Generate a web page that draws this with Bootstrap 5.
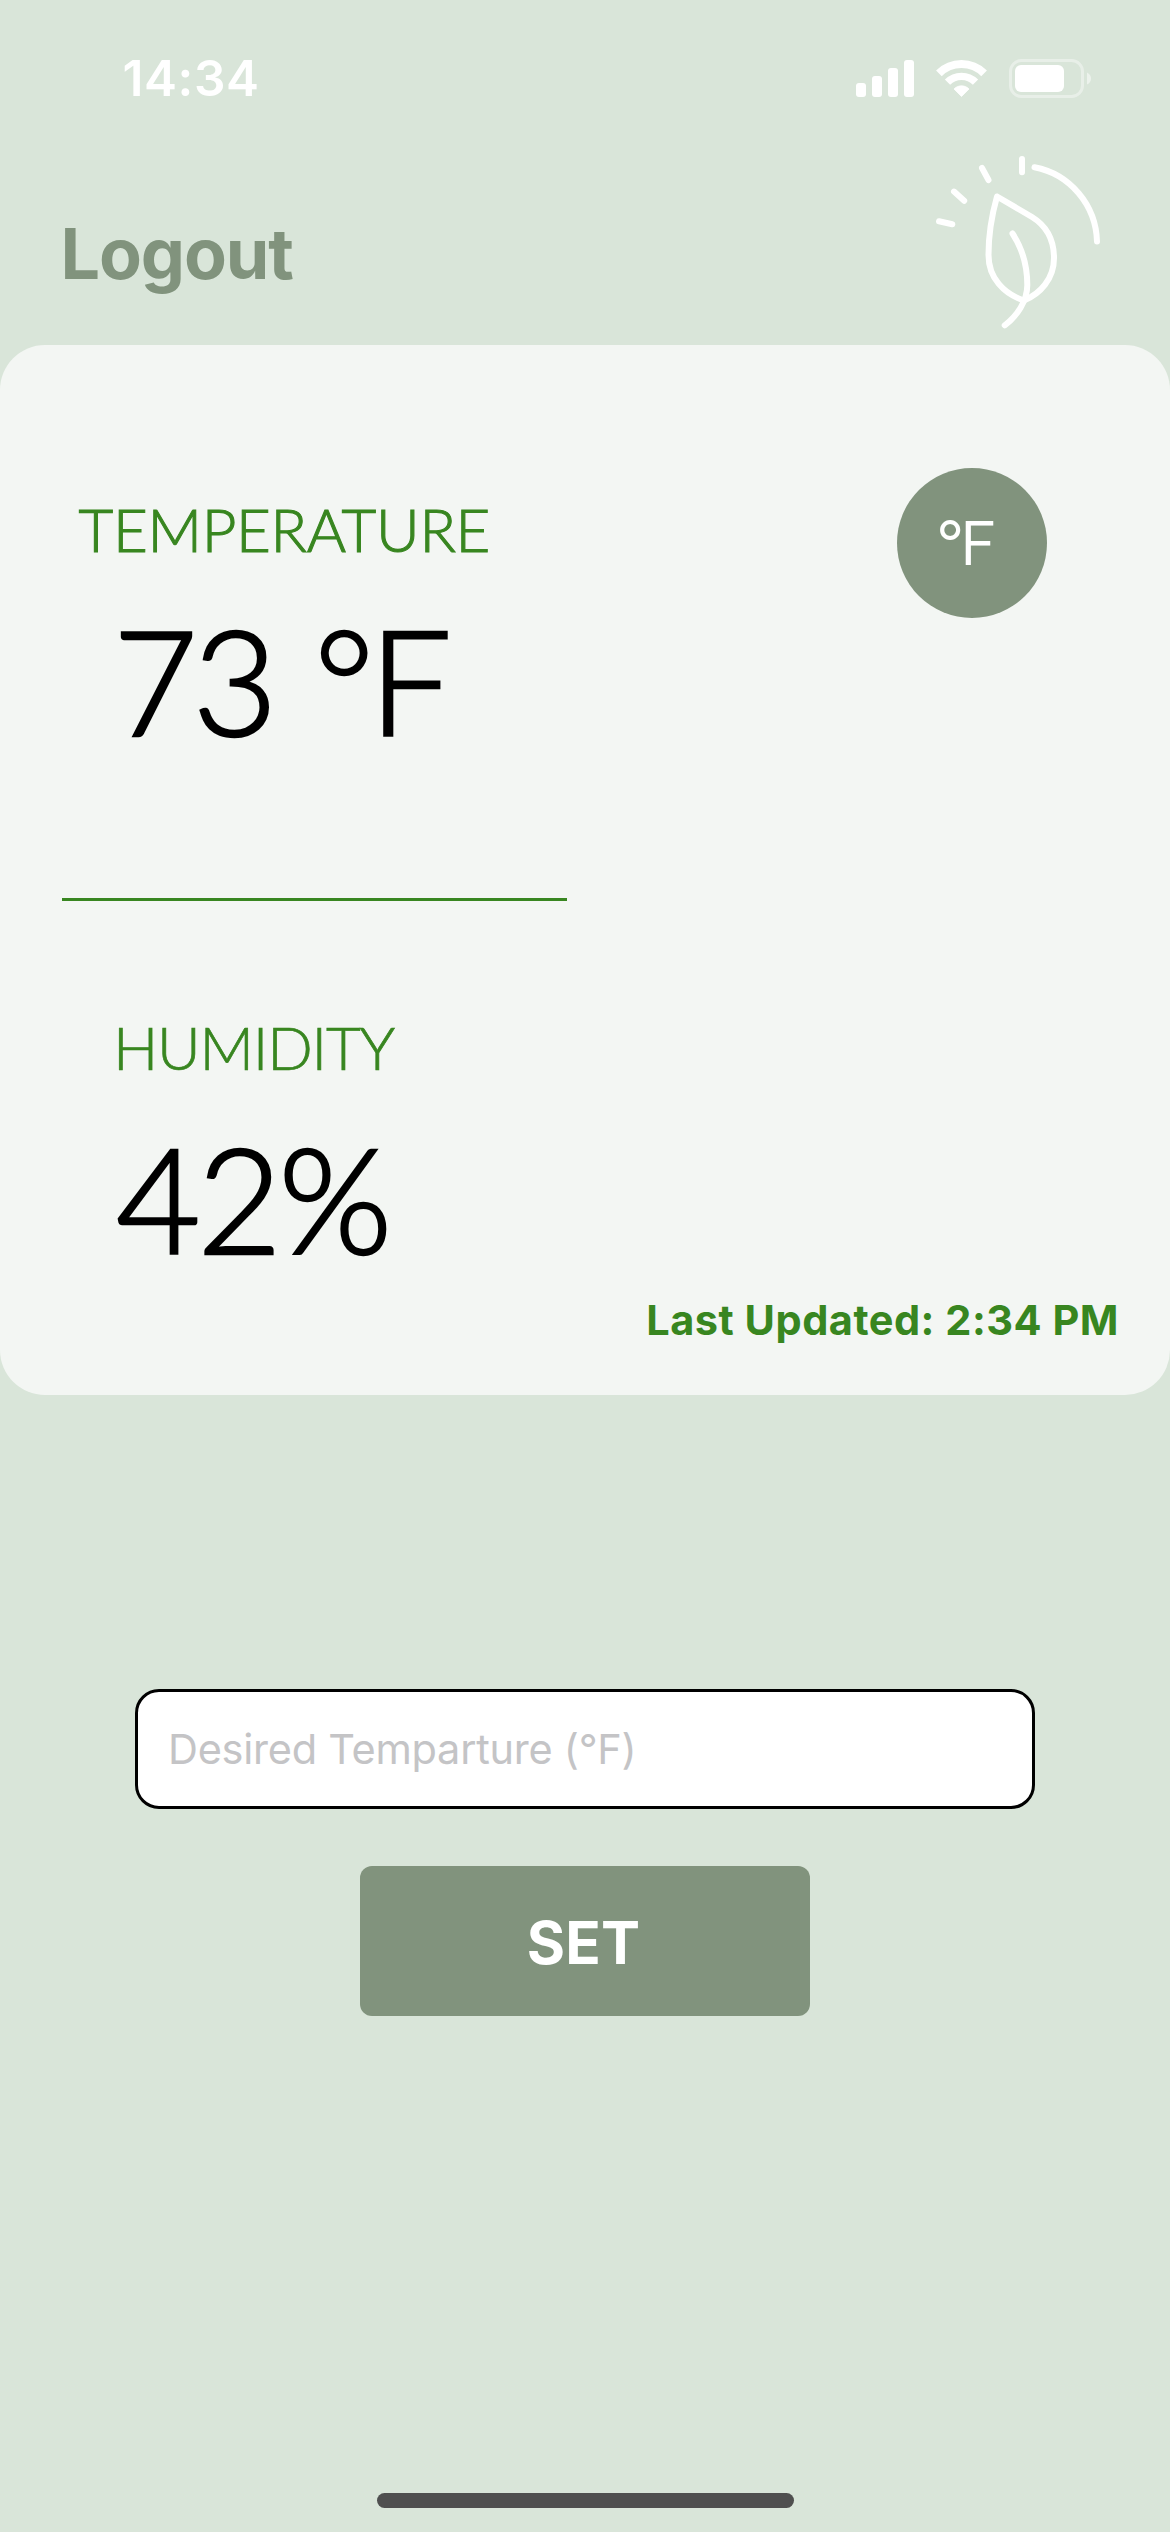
<!DOCTYPE html>
<html lang="en">
<head>
<meta charset="utf-8">
<meta name="viewport" content="width=device-width, initial-scale=1">
<title>Greenhouse</title>
<link href="https://cdn.jsdelivr.net/npm/bootstrap@5.3.0/dist/css/bootstrap.min.css" rel="stylesheet">
<style>
  body { background: #d9e5d9; font-family: Inter, "Liberation Sans", sans-serif; color: #000; }
  .screen { height: 2532px; overflow: hidden; }
  .status-row { height: 156px; padding: 0 79px 0 122.5px; }
  .clock { font-size: 49.5px; font-weight: 600; line-height: 60px; letter-spacing: .58px; }
  .status-icons { gap: 22px; }
  .top-row { height: 189px; padding: 0 50px 0 60.5px; }
  .logout { font-size: 70px; font-weight: 700; line-height: 84px; letter-spacing: -1.1px; color: #81937d; padding-top: 6px; }
  .readings { height: 1050px; border-radius: 45px; background: #f3f6f3; }
  .readings-left { width: 600px; padding-top: 148px; }
  .readings-right { padding: 123px 51px 50px 0; }
  .avenir { font-family: Lato, "Liberation Sans", sans-serif; font-weight: 300; white-space: nowrap; }
  .reading-title { font-size: 60px; line-height: 72px; color: #388620; }
  .reading-value { font-size: 146px; line-height: 176px; margin-top: 27px; -webkit-text-stroke: 2.6px #000; }
  .title-temp { letter-spacing: -.28px; padding-left: 78.5px; -webkit-text-stroke: 1.1px #388620; }
  .title-hum { letter-spacing: -1.21px; padding-left: 113px; margin-top: 110px; -webkit-text-stroke: .7px #388620; }
  .value-temp { letter-spacing: -5px; word-spacing: 7px; padding-left: 113px; }
  .value-hum { letter-spacing: -3.4px; padding-left: 116px; }
  .divider { width: 505px; height: 3px; margin: 130px 0 0 62px; background: #388620; }
  .unit-btn { width: 150px; height: 150px; margin-right: 72px; padding: 0 14px 5px 0; font-size: 60px; line-height: 72px; letter-spacing: -2px; -webkit-text-stroke: 2px #fff; }
  .sage, .sage:hover { background: #81937d; color: #fff; }
  .updated { font-size: 41.5px; font-weight: 700; line-height: 50px; letter-spacing: .5px; color: #388620; white-space: nowrap; }
  .temp-input, .temp-input:focus { width: 900px; height: 120px; margin-top: 294px; padding: 0 30px; border: 3px solid #000; border-radius: 24px; font-size: 41.5px; letter-spacing: -.26px; background: #fff; }
  .temp-input::placeholder { color: #c4c4c6; opacity: 1; }
  .set-btn { width: 450px; height: 150px; margin-top: 57px; padding: 9px 3px 6px 0; border-radius: 12px; font-size: 58.5px; font-weight: 700; line-height: 70px; letter-spacing: .2px; }
  .home-bar { width: 417px; height: 15px; margin-top: 477px; background: #4f4f4f; }
</style>
</head>
<body>
<main class="screen d-flex flex-column">
  <div class="status-row d-flex align-items-center justify-content-between text-white">
    <span class="clock">14:34</span>
    <div class="status-icons d-flex align-items-center">
      <svg width="58" height="37" fill="#fff" aria-hidden="true"><rect y="23" width="10" height="14" rx="3"/><rect x="16" y="16" width="10" height="21" rx="3"/><rect x="32" y="8" width="10" height="29" rx="3"/><rect x="48" width="10" height="37" rx="3"/></svg>
      <svg width="51" height="37" viewBox="0 0 51 37" fill="none" stroke="#fff" aria-hidden="true"><path d="M2.9 13.4A32 32 0 0 1 48.1 13.4" stroke-width="8"/><path d="M11.5 22.2A19.8 19.8 0 0 1 39.5 22.2" stroke-width="7.4"/><path d="M25.5 36.5L18 29C22 24.8 29 24.8 33 29Z" fill="#fff" stroke-width=".8" stroke-linejoin="round"/></svg>
      <svg width="82" height="39" aria-hidden="true"><rect x="1.5" y="1.5" width="72" height="36" rx="11" fill="none" stroke="#fff" stroke-opacity=".4" stroke-width="3"/><rect x="6" y="6" width="49" height="27" rx="6" fill="#fff"/><path d="M78 13.5Q82 15.5 82 19.5T78 25.5Z" fill="#fff" fill-opacity=".5"/></svg>
    </div>
  </div>

  <header class="top-row d-flex align-items-center justify-content-between">
    <a href="#" class="logout text-decoration-none">Logout</a>
    <svg width="200" height="189" viewBox="0 11 200 189" fill="none" stroke="#fff" stroke-width="6" stroke-linecap="round" stroke-linejoin="round" role="img" aria-label="Leaf">
      <path d="M102 14V27.3M62 23L68.5 35M34 46.6L44.2 55.8M19 76.3L32.3 79.3"/>
      <path d="M114.5 22.2C150 29 176 60 177 96.5"/>
      <path d="M77 51.5L112 72C125 80 134 92 134 113C134 134 120 149 104 155.5C84 149 68.5 133 68.5 110C68.5 90 71.5 71 77 51.5Z"/>
      <path d="M92.5 88.5C102 103 107.3 121 107.3 140C107.3 156 97 171 84.7 180.3"/>
    </svg>
  </header>

  <section class="readings d-flex justify-content-between">
    <div class="readings-left">
      <div class="avenir reading-title title-temp">TEMPERATURE</div>
      <div class="avenir reading-value value-temp">73 °F</div>
      <div class="divider"></div>
      <div class="avenir reading-title title-hum">HUMIDITY</div>
      <div class="avenir reading-value value-hum">42%</div>
    </div>
    <div class="readings-right d-flex flex-column align-items-end justify-content-between">
      <button type="button" class="unit-btn sage avenir rounded-circle border-0 d-flex align-items-center justify-content-center">°F</button>
      <div class="updated">Last Updated: 2:34 PM</div>
    </div>
  </section>

  <form class="d-flex flex-column align-items-center">
    <input type="text" class="temp-input form-control" placeholder="Desired Temparture (°F)" aria-label="Desired temperature">
    <button type="button" class="set-btn sage btn border-0">SET</button>
  </form>
  <div class="home-bar rounded-pill mx-auto"></div>
</main>
<script src="https://cdn.jsdelivr.net/npm/bootstrap@5.3.0/dist/js/bootstrap.bundle.min.js"></script>
</body>
</html>
